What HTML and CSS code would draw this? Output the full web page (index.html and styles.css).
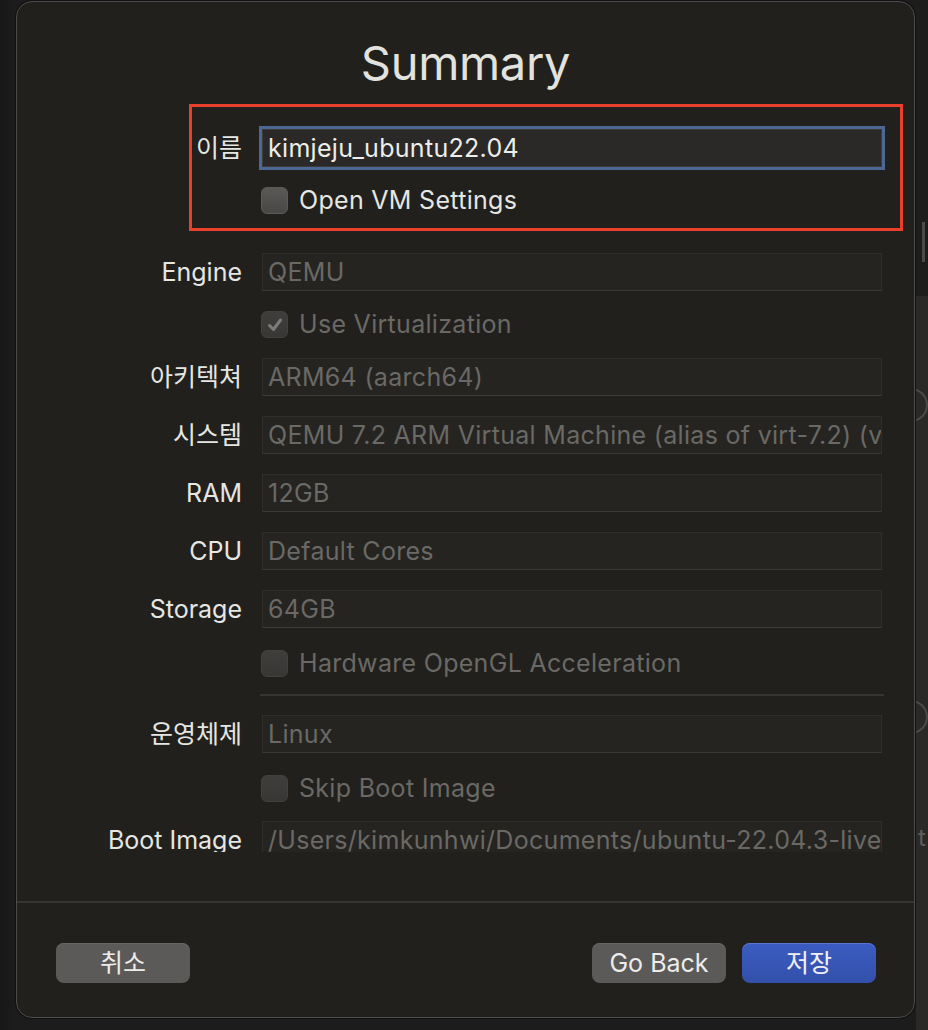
FILE: index.html
```html
<!DOCTYPE html>
<html lang="ko">
<head>
<meta charset="utf-8">
<title>Summary</title>
<link rel="stylesheet" href="styles.css">
</head>
<body>
<div class="desktop">
  <div class="behind">
    <div class="behind-top"></div>
    <div class="behind-panel">
      <div class="behind-knob k1"></div>
      <div class="behind-knob k2"></div>
      <span class="behind-t">t</span>
    </div>
  </div>

  <div class="dialog">
    <h1 class="title">Summary</h1>

    <div class="scroll">
      <div class="form">
        <div class="row">
          <label class="label">이름</label>
          <div class="input">kimjeju_ubuntu22.04</div>
        </div>
        <div class="row cb-row">
          <span></span>
          <div class="check"><span class="box on"></span><span class="check-text">Open VM Settings</span></div>
        </div>

        <div class="row gap-lg">
          <label class="label">Engine</label>
          <div class="field">QEMU</div>
        </div>
        <div class="row cb-row">
          <span></span>
          <div class="check dim"><span class="box checked"><svg viewBox="0 0 20 20" width="20" height="20"><path d="M4.5 10.5 L8.5 14.5 L15.5 5" fill="none" stroke="#7d7c79" stroke-width="3" stroke-linecap="round" stroke-linejoin="round"/></svg></span><span class="check-text">Use Virtualization</span></div>
        </div>
        <div class="row">
          <label class="label">아키텍쳐</label>
          <div class="field">ARM64 (aarch64)</div>
        </div>
        <div class="row">
          <label class="label">시스템</label>
          <div class="field">QEMU 7.2 ARM Virtual Machine (alias of virt-7.2) (virt)</div>
        </div>
        <div class="row">
          <label class="label">RAM</label>
          <div class="field">12GB</div>
        </div>
        <div class="row">
          <label class="label">CPU</label>
          <div class="field">Default Cores</div>
        </div>
        <div class="row">
          <label class="label">Storage</label>
          <div class="field">64GB</div>
        </div>
        <div class="row cb-row cb-hw">
          <span></span>
          <div class="check dim"><span class="box"></span><span class="check-text">Hardware OpenGL Acceleration</span></div>
        </div>
        <div class="row sep-row">
          <span></span>
          <div class="sep"></div>
        </div>
        <div class="row os-row">
          <label class="label">운영체제</label>
          <div class="field">Linux</div>
        </div>
        <div class="row cb-row cb-skip">
          <span></span>
          <div class="check dim"><span class="box"></span><span class="check-text">Skip Boot Image</span></div>
        </div>
        <div class="row boot-row">
          <label class="label">Boot Image</label>
          <div class="field">/Users/kimkunhwi/Documents/ubuntu-22.04.3-live-server-arm64.iso</div>
        </div>
      </div>
    </div>

    <div class="footer">
      <button class="btn">취소</button>
      <div class="btn-group">
        <button class="btn">Go Back</button>
        <button class="btn primary">저장</button>
      </div>
    </div>

    <div class="annot"></div>
  </div>
</div>
</body>
</html>
```

FILE: styles.css
```css
html, body {
  margin: 0;
  padding: 0;
}
body {
  background: #1b1b1b;
  width: 928px;
  height: 1030px;
  overflow: hidden;
  font-family: "Inter", "Noto Sans CJK KR", sans-serif;
}
.desktop {
  position: relative;
  width: 928px;
  height: 1030px;
  background: linear-gradient(90deg, #181818 0, #1c1c1c 16px);
}

/* window behind the sheet (right edge) */
.behind {
  position: absolute;
  left: 916px;
  top: 0;
  width: 12px;
  height: 1030px;
  background: #1d1d1c;
}
.behind-top {
  position: absolute;
  left: 6px;
  top: 222px;
  width: 3px;
  height: 40px;
  background: #4a4a48;
}
.behind-panel {
  position: absolute;
  left: 0;
  top: 296px;
  width: 12px;
  height: 734px;
  background: #2a2927;
  overflow: hidden;
}
.behind-knob {
  position: absolute;
  left: -22px;
  width: 30px;
  height: 30px;
  border-radius: 50%;
  border: 2px solid #4b4a48;
}
.k1 { top: 92px; }
.k2 { top: 404px; }
.behind-t {
  position: absolute;
  left: 2px;
  top: 530px;
  font-size: 24px;
  line-height: 24px;
  color: #5e5d5a;
}

/* sheet */
.dialog {
  position: absolute;
  left: 16px;
  top: 1px;
  width: 899px;
  height: 1017px;
  box-sizing: border-box;
  background: #21201d;
  border: 1px solid #4d4c4a;
  border-radius: 16px;
  display: flex;
  flex-direction: column;
  box-shadow: 0 0 0 1px #111;
}
.title {
  margin: 0;
  padding-top: 33px;
  height: 56px;
  line-height: 56px;
  text-align: center;
  font-family: "Inter", sans-serif;
  font-weight: 400;
  font-size: 47px;
  color: #e2e2de;
  letter-spacing: -0.3px;
}

.scroll {
  height: 761px;
  overflow: hidden;
  flex: none;
}
.form {
  padding-top: 38px;
  display: flex;
  flex-direction: column;
  gap: 20px;
}
.row {
  display: grid;
  grid-template-columns: 225px 620px;
  column-gap: 20px;
  align-items: center;
  height: 38px;
}
.cb-row { height: 27px; }
.gap-lg { margin-top: 19px; }
.cb-hw { margin-top: 2px; }
.sep-row { height: 2px; margin-top: -3px; }
.os-row { margin-top: -1px; }
.cb-skip { margin-top: 2px; }
.boot-row { margin-top: -1px; }

.label {
  text-align: right;
  font-size: 25px;
  line-height: 26px;
  color: #e6e6e2;
  white-space: nowrap;
}

.input {
  height: 38px;
  box-sizing: border-box;
  background: #2a2927;
  border: 1px solid #3c3b38;
  outline: 3px solid #4b6894;
  outline-offset: 0;
  padding-left: 5px;
  line-height: 36px;
  font-size: 25px;
  letter-spacing: 0.3px;
  color: #ededea;
  white-space: nowrap;
  overflow: hidden;
}
.field {
  height: 38px;
  box-sizing: border-box;
  background: #252421;
  border: 1px solid #2f2e2b;
  border-bottom-color: #3a3936;
  padding-left: 5px;
  line-height: 36px;
  font-size: 25px;
  letter-spacing: 0.3px;
  color: #6a6965;
  white-space: nowrap;
  overflow: hidden;
}

.check {
  display: flex;
  align-items: center;
  gap: 11px;
  margin-left: -1px;
  height: 27px;
}
.box {
  flex: none;
  width: 27px;
  height: 27px;
  box-sizing: border-box;
  border-radius: 6px;
  background: linear-gradient(#3f3e3c, #383735);
  border: 1px solid #42413e;
  display: flex;
  align-items: center;
  justify-content: center;
}
.box.on {
  background: linear-gradient(#5a5957, #484745);
  border-color: #5c5b59;
}
.check-text {
  font-size: 25px;
  line-height: 27px;
  letter-spacing: 0.3px;
  color: #e6e6e2;
  white-space: nowrap;
}
.check.dim .check-text { color: #6a6965; }

.sep {
  height: 2px;
  background: #363533;
  margin-left: -2px;
  margin-right: -2px;
}

.footer {
  margin-top: auto;
  border-top: 2px solid #363533;
  padding: 40px 38px 34px 39px;
  display: flex;
  justify-content: space-between;
  align-items: center;
}
.btn-group {
  display: flex;
  gap: 16px;
}
.btn {
  width: 134px;
  height: 40px;
  border: none;
  border-radius: 8px;
  background: #5b5a58;
  box-shadow: inset 0 1px 0 #686765;
  color: #ececea;
  font-family: "Inter", "Noto Sans CJK KR", sans-serif;
  font-size: 25px;
  padding: 0;
  line-height: 40px;
}
.btn.primary {
  background: linear-gradient(#3b5cc2, #3350aa);
  box-shadow: inset 0 1px 0 #5575d0;
  color: #f0f0f4;
}

/* red annotation drawn over the name section */
.annot {
  position: absolute;
  left: 172px;
  top: 102px;
  width: 714px;
  height: 127px;
  box-sizing: border-box;
  border: 3px solid #e8402a;
  pointer-events: none;
}
```
